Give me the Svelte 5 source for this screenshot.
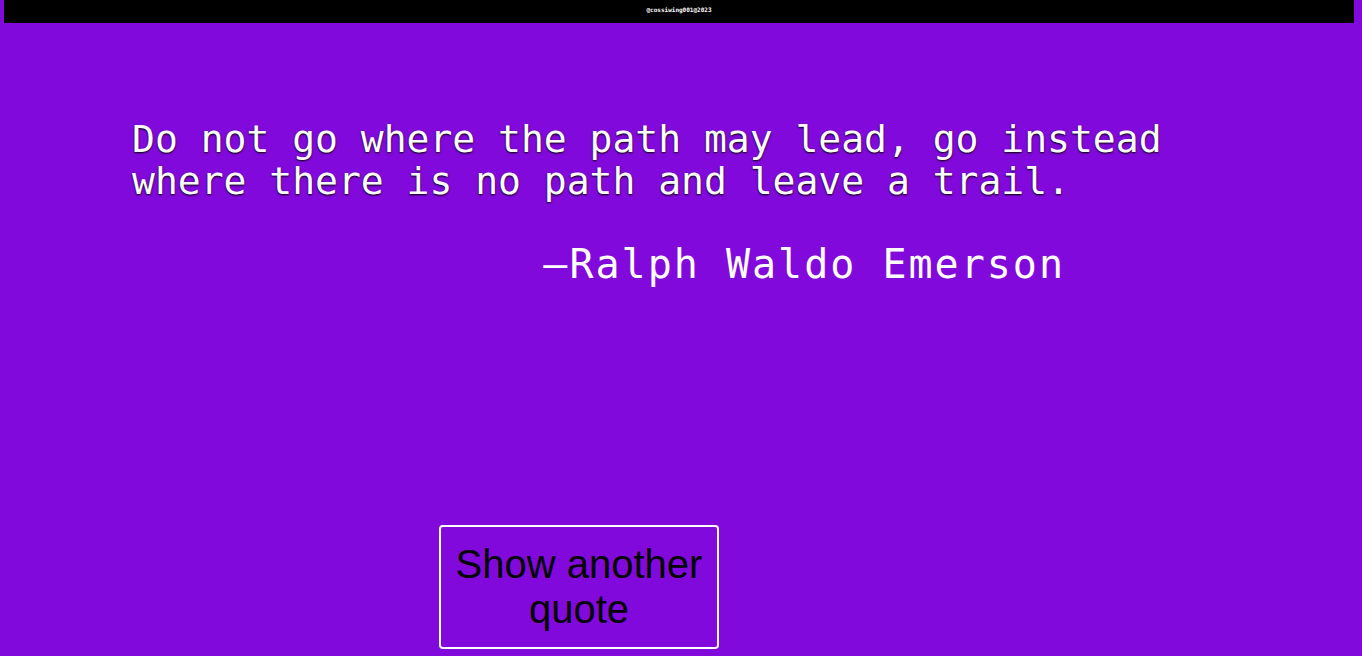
<script>
  const quotes = [
    {
      text: 'Do not go where the path may lead, go instead where there is no path and leave a trail.',
      author: 'Ralph Waldo Emerson'
    }
  ];
  let index = $state(0);
  const quote = $derived(quotes[index]);

  function next() {
    index = (index + 1) % quotes.length;
  }
</script>

<div class="page">
  <header>@cossiwing001@2023</header>
  <main>
    <blockquote>
      <p class="text">{quote.text}</p>
      <footer>—{quote.author}</footer>
    </blockquote>
    <button type="button" onclick={next}>Show another quote</button>
  </main>
</div>

<style>
  :global(body) {
    background: #8209db;
  }

  .page {
    box-sizing: border-box;
    min-height: 100vh;
    padding: 0 8px 7px 4px;
    display: flex;
    flex-direction: column;
    color: #fff;
    font-family: "DejaVu Sans Mono", monospace;
  }

  header {
    padding: 6px 0 9px;
    background: #000;
    font-size: 6px;
    line-height: 8px;
    font-weight: bold;
    text-align: center;
  }

  main {
    flex: 1;
    display: flex;
    flex-direction: column;
    justify-content: space-between;
    padding: 95px 129px 0 128px;
  }

  blockquote {
    margin: 0;
  }

  .text {
    margin: 0;
    font-size: 38px;
    line-height: 42px;
    text-shadow: 0 1px 2px #000;
  }

  footer {
    margin: 39px 160px 0 0;
    font-size: 40px;
    line-height: 46px;
    letter-spacing: 2px;
    text-align: right;
  }

  button {
    width: 280px;
    margin-left: 307px;
    padding: 15px 14px;
    border: 2px solid #fff;
    border-radius: 4px;
    background: transparent;
    color: #000;
    font-family: "Liberation Sans", Arial, sans-serif;
    font-size: 40px;
    line-height: 45px;
    text-align: center;
    cursor: pointer;
  }
</style>
